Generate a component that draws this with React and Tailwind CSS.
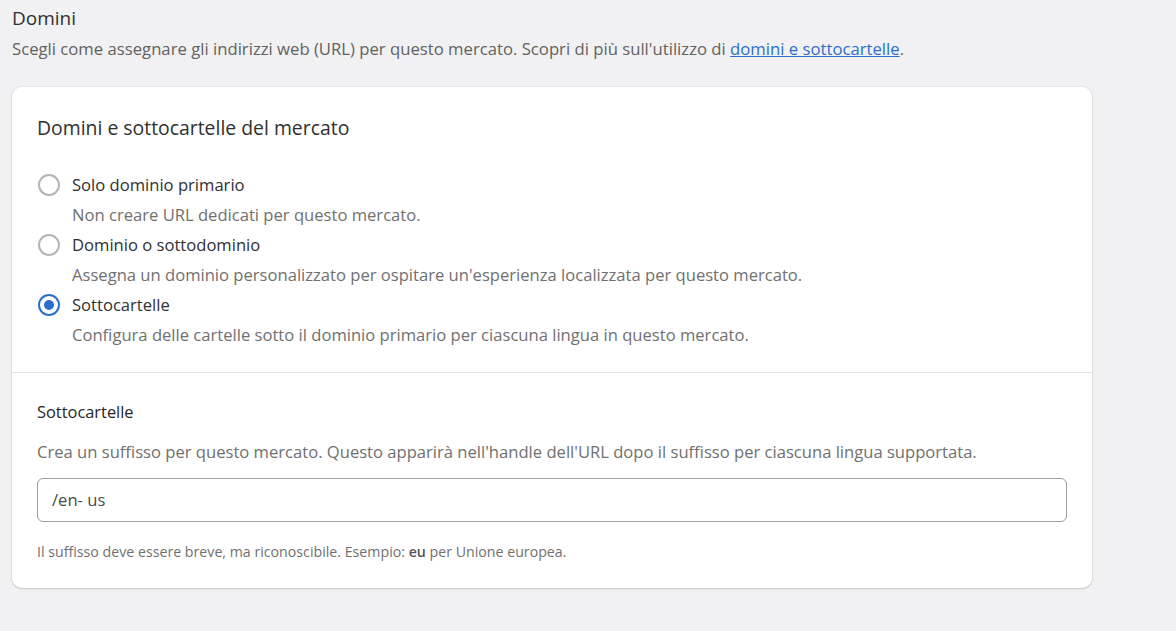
import React from "react";

function Radio({ checked }) {
  return (
    <span className={"flex h-[22px] w-[22px] shrink-0 items-center justify-center rounded-full border-2 bg-white " + (checked ? "border-[#2c6ecb]" : "border-[#b5b5b5]")}>
      {checked && <span className="h-[10px] w-[10px] rounded-full bg-[#2c6ecb]" />}
    </span>
  );
}

function Option({ label, desc, checked }) {
  return (
    <div className="flex flex-col">
      <div className="flex h-[30px] items-center gap-[12px] pl-[1px]">
        <Radio checked={checked} />
        <span className="text-[16.6px] text-[#303030]">{label}</span>
      </div>
      <div className="flex h-[30px] items-center pl-[35px] text-[16.6px] text-[#707070]">{desc}</div>
    </div>
  );
}

export default function App() {
  return (
    <div className="min-h-[631px] w-full bg-[#f1f1f3] pl-[12px] pt-[6px]" style={{ fontFamily: "'Open Sans',sans-serif" }}>
      <h2 className="h-[24px] text-[19px] leading-[24px] text-[#303030]">Domini</h2>
      <p className="mt-[7px] h-[24px] text-[16.7px] leading-[24px] text-[#616161]">
        Scegli come assegnare gli indirizzi web (URL) per questo mercato. Scopri di più sull'utilizzo di{" "}
        <a className="text-[#2c6ecb] underline">domini e sottocartelle</a>.
      </p>
      <div className="mt-[26px] w-[1080px] rounded-[10px] bg-white shadow-[0_1px_2px_rgba(0,0,0,0.15),0_0_0_1px_rgba(0,0,0,0.03)]">
        <div className="px-[25px] pb-[22px] pt-[28px]">
          <h3 className="h-[26px] text-[19.4px] font-medium leading-[26px] text-[#303030]">Domini e sottocartelle del mercato</h3>
          <div className="mt-[29px] flex flex-col">
            <Option label="Solo dominio primario" desc="Non creare URL dedicati per questo mercato." />
            <Option label="Dominio o sottodominio" desc="Assegna un dominio personalizzato per ospitare un'esperienza localizzata per questo mercato." />
            <Option checked label="Sottocartelle" desc="Configura delle cartelle sotto il dominio primario per ciascuna lingua in questo mercato." />
          </div>
        </div>
        <div className="h-px bg-[#e3e3e3]" />
        <div className="px-[25px] pb-[26px] pt-[27px]">
          <h4 className="h-[24px] text-[16.4px] font-medium leading-[24px] text-[#262626]">Sottocartelle</h4>
          <p className="mt-[16px] h-[24px] text-[16.6px] leading-[24px] text-[#707070]">
            Crea un suffisso per questo mercato. Questo apparirà nell'handle dell'URL dopo il suffisso per ciascuna lingua supportata.
          </p>
          <div className="mt-[14px] flex h-[44px] w-[1030px] items-center rounded-[6px] border border-[#9e9e9e] px-[14px] text-[16.6px] text-[#4a4a4a]">
            /en- us
          </div>
          <p className="mt-[20px] text-[14.2px] leading-[20px] text-[#707070]">
            Il suffisso deve essere breve, ma riconoscibile. Esempio: <span className="font-semibold text-[#555]">eu</span> per Unione europea.
          </p>
        </div>
      </div>
    </div>
  );
}
